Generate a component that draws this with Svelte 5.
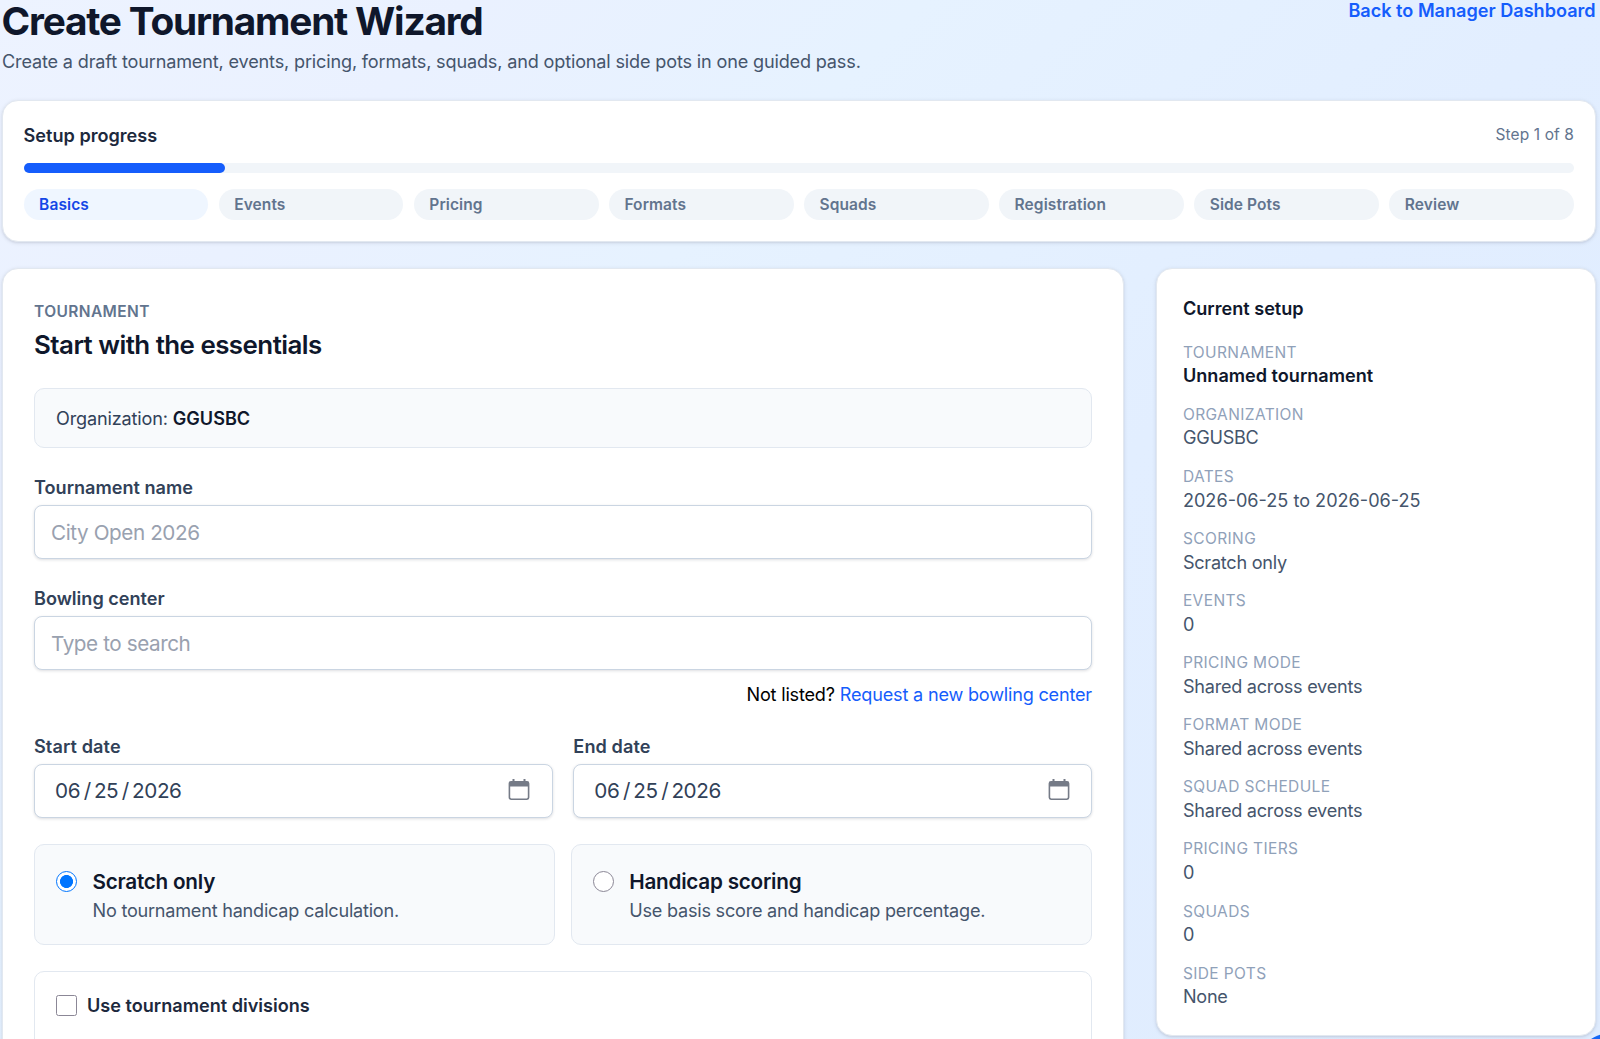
<script lang="ts">
  const steps = ['Basics', 'Events', 'Pricing', 'Formats', 'Squads', 'Registration', 'Side Pots', 'Review']
  const currentStep = 1
  const organization = 'GGUSBC'

  let tournamentName = $state('')
  let bowlingCenter = $state('')
  let scoring = $state('scratch')
  let useDivisions = $state(false)

  const dates = [
    { label: 'Start date', value: '2026-06-25' },
    { label: 'End date', value: '2026-06-25' }
  ]

  const scoringOptions = [
    { value: 'scratch', title: 'Scratch only', hint: 'No tournament handicap calculation.' },
    { value: 'handicap', title: 'Handicap scoring', hint: 'Use basis score and handicap percentage.' }
  ]

  let summary = $derived([
    { label: 'Tournament', value: tournamentName || 'Unnamed tournament', strong: true },
    { label: 'Organization', value: organization },
    { label: 'Dates', value: `${dates[0].value} to ${dates[1].value}`, numeric: true },
    { label: 'Scoring', value: scoring === 'scratch' ? 'Scratch only' : 'Handicap scoring' },
    { label: 'Events', value: '0' },
    { label: 'Pricing mode', value: 'Shared across events' },
    { label: 'Format mode', value: 'Shared across events' },
    { label: 'Squad schedule', value: 'Shared across events' },
    { label: 'Pricing tiers', value: '0' },
    { label: 'Squads', value: '0' },
    { label: 'Side pots', value: 'None' }
  ])

  const progress = Math.round((currentStep / steps.length) * 100)

  function dateParts(value: string) {
    const [year, month, day] = value.split('-')
    return [month, day, year]
  }
</script>

<div class="page">
  <header class="page-header">
    <div>
      <h1>Create Tournament Wizard</h1>
      <p>Create a draft tournament, events, pricing, formats, squads, and optional side pots in one guided pass.</p>
    </div>
    <a href="#dashboard">Back to Manager Dashboard</a>
  </header>

  <section class="card progress-card">
    <div class="progress-heading">
      <h2>Setup progress</h2>
      <span>Step {currentStep} of {steps.length}</span>
    </div>
    <div class="track">
      <div class="fill" style="width: {progress}%"></div>
    </div>
    <ol class="steps">
      {#each steps as step, index}
        <li class:active={index + 1 === currentStep}>{step}</li>
      {/each}
    </ol>
  </section>

  <div class="columns">
    <main class="card form-card">
      <p class="eyebrow">Tournament</p>
      <h2>Start with the essentials</h2>

      <div class="organization">Organization: <strong>{organization}</strong></div>

      <label class="field">
        <span>Tournament name</span>
        <input type="text" placeholder="City Open 2026" bind:value={tournamentName} />
      </label>

      <label class="field">
        <span>Bowling center</span>
        <input type="text" placeholder="Type to search" bind:value={bowlingCenter} />
      </label>
      <p class="not-listed">Not listed? <a href="#request">Request a new bowling center</a></p>

      <div class="date-grid">
        {#each dates as date}
          {@const [month, day, year] = dateParts(date.value)}
          <div class="date-field">
            <span>{date.label}</span>
            <div class="date-input">
              <span class="date-value">{month}<i>/</i>{day}<i>/</i>{year}</span>
              <svg width="22" height="22" viewBox="0 0 22 22" aria-hidden="true">
                <path
                  fill="#757b87"
                  fill-rule="evenodd"
                  d="M4.500 0h2v2h9V0h2v2H19a2.400 2.400 0 0 1 2.400 2.400v14.200A2.400 2.400 0 0 1 19 21H3A2.400 2.400 0 0 1 .6 18.600V4.400A2.400 2.400 0 0 1 3 2h1.500zM2.200 7.500v10.800a1.100 1.100 0 0 0 1.100 1.100h15.400a1.100 1.100 0 0 0 1.100-1.100V7.500z"
                />
              </svg>
            </div>
          </div>
        {/each}
      </div>

      <div class="scoring-grid">
        {#each scoringOptions as option}
          <label class="option">
            <input type="radio" name="scoring" value={option.value} bind:group={scoring} />
            <span>
              <strong>{option.title}</strong>
              <small>{option.hint}</small>
            </span>
          </label>
        {/each}
      </div>

      <div class="divisions">
        <label>
          <input type="checkbox" bind:checked={useDivisions} />
          <span>Use tournament divisions</span>
        </label>
      </div>
    </main>

    <aside class="card summary-card">
      <h2>Current setup</h2>
      <dl>
        {#each summary as item}
          <div>
            <dt>{item.label}</dt>
            <dd class:strong={item.strong} class:numeric={item.numeric}>{item.value}</dd>
          </div>
        {/each}
      </dl>
    </aside>
  </div>

  <button class="help" aria-label="Help"></button>
</div>

<style>
  :global(body) {
    overflow: hidden;
  }

  .page {
    position: relative;
    box-sizing: border-box;
    height: 1039px;
    padding: 0 4.4px 0 2px;
    overflow: hidden;
    background: linear-gradient(135deg, #edf3ff 0%, #eaf1ff 18%, #e6f2ff 35%, #e2eeff 60%, #dfecfe 100%);
    color: #0f172b;
    font-family: Inter, "Liberation Sans", sans-serif;
    font-size: 18.1px;
    line-height: 26px;
    white-space: nowrap;
  }

  .page * {
    box-sizing: border-box;
  }

  h1,
  h2,
  p,
  ol,
  dl,
  dd {
    margin: 0;
    padding: 0;
  }

  a {
    color: #155dfc;
    text-decoration: none;
  }

  .card {
    border: 1px solid #e2e8f0;
    border-radius: 16px;
    background: white;
    box-shadow: 0 1px 4px rgba(15, 23, 42, 0.1), 0 1px 2px rgba(15, 23, 42, 0.06);
  }

  .page-header {
    display: flex;
    justify-content: space-between;
    height: 100px;
  }

  h1 {
    margin-left: -0.5px;
    font-size: 38.8px;
    font-weight: 700;
    line-height: 41px;
    letter-spacing: -1.21px;
  }

  .page-header p {
    margin-top: 7px;
    color: #45556c;
    letter-spacing: -0.165px;
  }

  .page-header a {
    margin-top: -3.5px;
    font-weight: 600;
  }

  .progress-card {
    height: 142px;
    padding: 20px 20.6px 21px;
  }

  .progress-heading {
    display: flex;
    align-items: center;
    justify-content: space-between;
    height: 28px;
  }

  .progress-heading h2 {
    color: #1d293d;
    font-size: 18.1px;
    font-weight: 600;
  }

  .progress-heading span {
    color: #62748e;
    font-size: 15.5px;
    letter-spacing: 0.1px;
  }

  .track {
    height: 10px;
    margin-top: 14.4px;
    border-radius: 5px;
    background: #f1f5f9;
  }

  .fill {
    height: 100%;
    border-radius: 5px;
    background: #155dfc;
  }

  .steps {
    display: grid;
    grid-template-columns: repeat(8, minmax(0, 1fr));
    gap: 10.4px;
    margin-top: 16px;
    list-style: none;
  }

  .steps li {
    height: 31px;
    padding: 0 15.5px;
    border-radius: 16px;
    background: #f1f5f9;
    color: #62748e;
    font-size: 15.5px;
    font-weight: 600;
    line-height: 31px;
    letter-spacing: 0.1px;
  }

  .steps .active {
    background: #eff6ff;
    color: #1447e6;
  }

  .columns {
    display: grid;
    grid-template-columns: 1122px 439.2px;
    align-items: start;
    justify-content: space-between;
    margin-top: 26px;
  }

  .form-card {
    height: 900px;
    padding: 30px 31px 29px;
  }

  .eyebrow {
    color: #62748e;
    font-size: 15.5px;
    font-weight: 600;
    letter-spacing: 0.4px;
    text-transform: uppercase;
  }

  .form-card h2 {
    margin-top: 2px;
    font-size: 25.9px;
    font-weight: 600;
    line-height: 36px;
    letter-spacing: -0.53px;
  }

  .organization {
    height: 60px;
    margin-top: 25px;
    padding: 0 21px;
    border: 1px solid #e2e8f0;
    border-radius: 10px;
    background: #f8fafc;
    color: #314158;
    line-height: 58px;
    letter-spacing: -0.16px;
  }

  .organization strong {
    color: #0f172b;
    font-weight: 600;
    letter-spacing: 0;
  }

  .field {
    display: block;
    margin-top: 26px;
  }

  .field > span,
  .date-field > span {
    display: block;
    color: #314158;
    font-weight: 600;
  }

  .field input,
  .date-input {
    display: flex;
    width: 100%;
    height: 54px;
    margin-top: 5px;
    padding: 0 16px;
    border: 1px solid #cad5e2;
    border-radius: 8px;
    background: white;
    box-shadow: 0 1px 3px rgba(15, 23, 42, 0.14);
    color: #314158;
    font: inherit;
    font-size: 20.7px;
    letter-spacing: -0.42px;
  }

  .field input::placeholder {
    color: #99a1af;
    opacity: 1;
  }

  .not-listed {
    margin-top: 11px;
    color: #000;
    letter-spacing: -0.19px;
    text-align: right;
  }

  .date-grid {
    display: grid;
    grid-template-columns: 1fr 1fr;
    gap: 20.7px;
    margin-top: 25.5px;
  }

  .date-field > span {
    letter-spacing: 0.1px;
  }

  .date-input {
    align-items: center;
    justify-content: space-between;
    padding: 0 21.5px 0 20px;
  }

  .date-input svg {
    margin-top: -2px;
  }

  .date-value i {
    margin: 0 3.2px 0 3.6px;
    font-style: normal;
  }

  .scoring-grid {
    display: grid;
    grid-template-columns: 1fr 1fr;
    gap: 15.5px;
    margin-top: 26px;
  }

  .option {
    display: flex;
    gap: 15.5px;
    height: 101px;
    padding: 20px 21px;
    border: 1px solid #e2e8f0;
    border-radius: 10px;
    background: #f8fafc;
  }

  .option strong,
  .option small {
    display: block;
  }

  .option strong {
    margin-top: 1px;
    font-size: 20.7px;
    font-weight: 600;
    line-height: 31px;
    letter-spacing: -0.24px;
  }

  .option small {
    color: #45556c;
    font-size: 18.1px;
    line-height: 26px;
    letter-spacing: -0.23px;
  }

  input[type='radio'],
  input[type='checkbox'] {
    flex: none;
    width: 21px;
    height: 21px;
    margin: 0;
    appearance: none;
    background: white;
    border: 1px solid #8b8796;
  }

  input[type='radio'] {
    margin-top: 6px;
    border-radius: 50%;
  }

  input[type='radio']:checked {
    border: 1.5px solid #0075ff;
    background: radial-gradient(circle, #0075ff 0 6.2px, white 6.8px);
  }

  input[type='checkbox'] {
    border-radius: 2.5px;
  }

  .divisions {
    height: 140px;
    margin-top: 26px;
    padding: 20.5px 21px;
    border: 1px solid #e2e8f0;
    border-radius: 10px;
  }

  .divisions label {
    display: flex;
    align-items: center;
    gap: 10px;
    color: #1d293d;
    font-weight: 600;
  }

  .summary-card {
    height: 768px;
    padding: 26px 25.5px;
  }

  .summary-card h2 {
    font-size: 18.1px;
    font-weight: 600;
    line-height: 26px;
  }

  dl {
    display: grid;
    gap: 15.5px;
    margin-top: 21.6px;
  }

  dt {
    color: #90a1b9;
    font-size: 15.5px;
    letter-spacing: 0.38px;
    line-height: 20.7px;
    text-transform: uppercase;
  }

  dd {
    color: #45556c;
    line-height: 25.9px;
    letter-spacing: -0.25px;
  }

  dd.strong {
    color: #0f172b;
    font-weight: 600;
    letter-spacing: 0;
  }

  dd.numeric {
    letter-spacing: 0;
  }

  /* floating action circle, sits over the corner of the page */
  .help {
    position: absolute;
    top: 1033px;
    left: 1575px;
    width: 72px;
    height: 72px;
    padding: 0;
    border: 0;
    border-radius: 50%;
    background: #1668f5;
  }
</style>
